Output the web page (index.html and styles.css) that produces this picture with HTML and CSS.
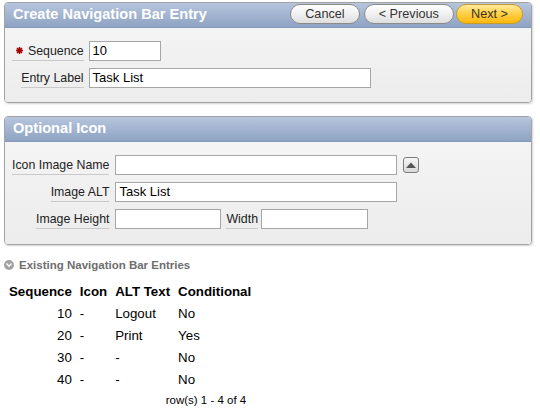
FILE: index.html
```html
<!DOCTYPE html>
<html>
<head>
<meta charset="utf-8">
<link rel="stylesheet" href="styles.css">
</head>
<body>
<div class="page">
  <div class="region">
    <div class="region-head">
      <div class="title">Create Navigation Bar Entry</div>
      <div class="buttons">
        <span class="btn btn-cancel">Cancel</span>
        <span class="btn">&lt; Previous</span>
        <span class="btn btn-next">Next &gt;</span>
      </div>
    </div>
    <div class="region-body form form-1">
      <label class="lbl"><svg class="req" width="7" height="7" viewBox="0 0 7 7"><path d="M3.5 0V7M0 3.5H7M1 1L6 6M6 1L1 6" stroke="#a50000" stroke-width="1.5"/></svg>Sequence</label>
      <div class="field"><span class="input w72">10</span></div>
      <label class="lbl">Entry Label</label>
      <div class="field"><span class="input w282">Task List</span></div>
    </div>
  </div>

  <div class="region region-2">
    <div class="region-head">
      <div class="title">Optional Icon</div>
    </div>
    <div class="region-body form form-2">
      <label class="lbl">Icon Image Name</label>
      <div class="field"><span class="input w282"></span><span class="popup"><svg width="10" height="6" viewBox="0 0 10 6"><path d="M0 6L5 0.5L10 6Z" fill="#555"/></svg></span></div>
      <label class="lbl">Image ALT</label>
      <div class="field"><span class="input w282">Task List</span></div>
      <label class="lbl">Image Height</label>
      <div class="field"><span class="input w106"></span><label class="lbl lbl-inline">Width</label><span class="input w107"></span></div>
    </div>
  </div>

  <div class="existing">
    <span class="circle"><svg width="6" height="4" viewBox="0 0 6 4"><path d="M0.5 0.5L3 3.2L5.5 0.5" stroke="#fff" stroke-width="1.4" fill="none"/></svg></span>
    <span>Existing Navigation Bar Entries</span>
  </div>

  <div class="report">
    <table>
      <thead>
        <tr><th>Sequence</th><th>Icon</th><th>ALT Text</th><th>Conditional</th></tr>
      </thead>
      <tbody>
        <tr><td class="num">10</td><td>-</td><td>Logout</td><td>No</td></tr>
        <tr><td class="num">20</td><td>-</td><td>Print</td><td>Yes</td></tr>
        <tr><td class="num">30</td><td>-</td><td>-</td><td>No</td></tr>
        <tr><td class="num">40</td><td>-</td><td>-</td><td>No</td></tr>
      </tbody>
    </table>
    <div class="pagination">row(s) 1 - 4 of 4</div>
  </div>
</div>
</body>
</html>
```

FILE: styles.css
```css
* { box-sizing: border-box; }
html, body { margin: 0; padding: 0; background: #fff; }
body {
  font-family: "Liberation Sans", Arial, sans-serif;
  font-size: 12px;
  color: #222;
}
.page {
  padding: 2px 8px 0 4px;
}
.region {
  border: 1px solid #a3a3a3;
  border-radius: 4px;
  box-shadow: 1px 1px 2px rgba(0,0,0,0.18);
  overflow: hidden;
}
.region-2 { margin-top: 13px; }
.region-head {
  height: 25px;
  display: flex;
  align-items: flex-start;
  justify-content: space-between;
  padding: 0 8px 0 8px;
  background: linear-gradient(#b6c5dd, #8ea3c3);
  border-bottom: 1px solid #8799b8;
}
.title {
  color: #fff;
  font-weight: bold;
  font-size: 14.6px;
  line-height: 22px;
}
.buttons {
  display: flex;
  margin-top: 1px;
  gap: 2px;
}
.btn {
  height: 20px;
  line-height: 18px;
  padding: 0 14px;
  border: 1px solid #8b8b8b;
  border-radius: 10px;
  background: linear-gradient(#ffffff, #f0f0f0 50%, #dedede);
  color: #333;
  font-size: 12.7px;
}
.btn-cancel { margin-right: 2px; }
.btn-next {
  border-color: #c79a2c;
  background: linear-gradient(#ffe99a, #ffcf45 50%, #ffb70d);
  color: #3a3320;
}
.region-body {
  background: linear-gradient(#f4f4f4, #ececec);
}
.form {
  display: grid;
  grid-template-columns: max-content 1fr;
  row-gap: 7px;
  column-gap: 5px;
  padding: 13px 8px 14px 7px;
}
.form-2 { column-gap: 6px; padding-bottom: 15px; }
.lbl {
  justify-self: end;
  height: 20px;
  line-height: 21px;
  border-bottom: 1px solid #c9c9c9;
  color: #222;
  font-size: 12.35px;
  white-space: nowrap;
}
.req { margin: 0 5px 2px 4px; vertical-align: middle; }
.field {
  display: flex;
  align-items: center;
}
.input {
  display: block;
  height: 20px;
  border: 1px solid #a6a6a6;
  background: #fff;
  padding: 0 3px;
  font-size: 13px;
  line-height: 18px;
  color: #000;
}
.w72 { width: 72px; }
.w282 { width: 282px; }
.w106 { width: 106px; }
.w107 { width: 107px; }
.lbl-inline { margin: 0 3px 0 5px; }
.popup {
  width: 16px;
  height: 16px;
  margin-left: 6px;
  border: 1px solid #7d7d7d;
  border-radius: 3px;
  background: linear-gradient(#f6f6f6, #d8d8d8);
  display: flex;
  align-items: center;
  justify-content: center;
}
.popup svg { margin-top: -1px; }
.existing {
  margin-top: 13px;
  height: 14px;
  display: flex;
  align-items: center;
  color: #6e6e6e;
  font-weight: bold;
  font-size: 11.5px;
}
.circle {
  width: 10px;
  height: 10px;
  border-radius: 50%;
  background: #a2a2a2;
  display: flex;
  align-items: center;
  justify-content: center;
  margin-right: 5px;
}
.report {
  display: inline-block;
  margin-top: 8px;
  margin-left: 1px;
}
table {
  border-collapse: collapse;
  border-spacing: 0;
  font-size: 13.3px;
  color: #000;
}
th, td {
  padding: 0 4px;
  height: 22px;
  text-align: left;
  white-space: nowrap;
}
th { font-weight: bold; }
td.num { text-align: right; }
.pagination {
  text-align: right;
  padding: 3px 9px 0 0;
  font-size: 11.5px;
  line-height: 14px;
  color: #000;
}
```
